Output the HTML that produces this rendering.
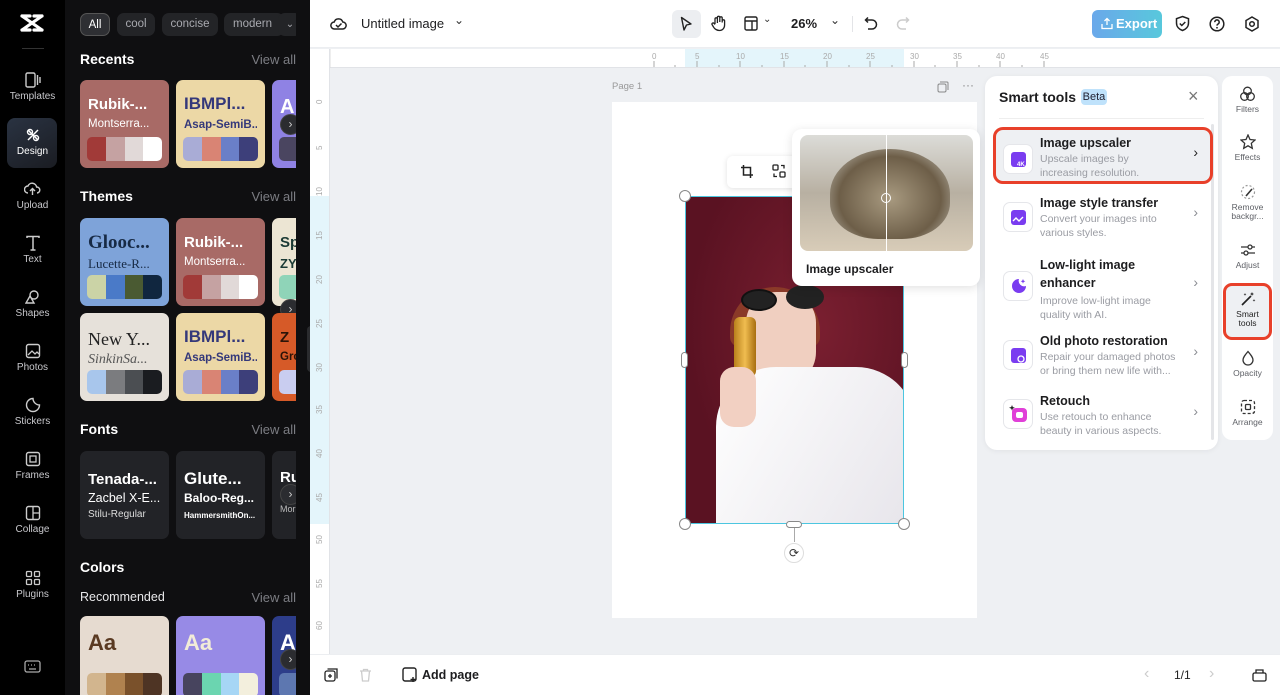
<!DOCTYPE html>
<html><head><meta charset="utf-8"><style>
*{box-sizing:border-box;margin:0;padding:0}
body{width:1280px;height:695px;overflow:hidden;font-family:"Liberation Sans",sans-serif;background:#eef0f3;position:relative}
.abs{position:absolute}
#rail{left:0;top:0;width:65px;height:695px;background:#000}
#panelbg{left:65px;top:0;width:245px;height:695px;background:#0f0f11}
#panel{left:65px;top:0;width:231px;height:695px;overflow:hidden}
.ri{position:absolute;left:0;width:65px;text-align:center;color:#c8c8cc;font-size:10px}
.ri svg{display:block;margin:0 auto 3px}
.chip{position:absolute;top:13px;height:23px;border-radius:7px;background:#232427;color:#a9aab0;font-size:11.5px;line-height:23px;text-align:center}
.h{position:absolute;left:15px;color:#fff;font-weight:bold;font-size:14px}
.va{position:absolute;right:0;color:#7c7d83;font-size:13px}
.card{position:absolute;width:89px;height:88px;border-radius:7px;overflow:hidden;padding:16px 8px 0}
.card .t1{font-weight:bold;font-size:15px;white-space:nowrap;overflow:hidden}
.card .t2{font-size:11.5px;margin-top:5px;white-space:nowrap;overflow:hidden}
.pal{position:absolute;left:7px;right:7px;bottom:7px;height:24px;border-radius:5px;overflow:hidden;display:flex}
.pal i{flex:1}
.arr{position:absolute;width:21px;height:21px;border-radius:50%;background:#2b2c30;border:1px solid #444;color:#ccc;font-size:12px;line-height:19px;text-align:center}
#top{left:310px;top:0;width:970px;height:48px;background:#fff;border-bottom:1px solid #eceef1}
.st{position:absolute;left:0;width:233px;padding-left:55px}
.st b{display:block;font-size:12.5px;color:#1d1d1f}
.st span{display:block;font-size:10.5px;color:#9a9ca3;line-height:14px;margin-top:2px}
.ico{position:absolute;left:18px;width:30px;height:30px;border:1px solid #e5e6ea;border-radius:7px;background:#fff}
.chev{position:absolute;right:20px;color:#8a8c92;font-size:14px}
.rr{position:absolute;left:0;width:51px;text-align:center;font-size:8.5px;color:#5e6066;line-height:9px}
.rr svg{display:block;margin:0 auto 3px}
</style></head><body>

<div id="rail" class="abs">
  <svg class="abs" style="left:20px;top:14px" width="24" height="18" viewBox="0 0 24 18"><path d="M2 2 L22 16 M22 2 L2 16 M2 2 H10 M14 16 H22 M14 2H22 M2 16H10" stroke="#fff" stroke-width="3.2" fill="none" stroke-linecap="round"/></svg>
  <div class="abs" style="left:22px;top:48px;width:22px;height:1px;background:#333"></div>
  <div class="ri" style="top:72px"><svg width="16" height="16" viewBox="0 0 16 16"><rect x="1" y="1" width="9" height="14" rx="1.5" fill="none" stroke="#ccc" stroke-width="1.4"/><path d="M12.5 3v10M15 5v6" stroke="#ccc" stroke-width="1.4"/></svg>Templates</div>
  <div class="abs" style="left:7px;top:118px;width:50px;height:50px;border-radius:8px;background:linear-gradient(150deg,#2a3342,#1a1c22)"></div>
  <div class="ri" style="top:127px;color:#fff"><svg width="16" height="16" viewBox="0 0 16 16"><path d="M3 3l10 10M13 3L3 13" stroke="#fff" stroke-width="1.5" fill="none"/><circle cx="5" cy="5" r="2.5" fill="none" stroke="#fff" stroke-width="1.4"/><circle cx="11" cy="11" r="2.5" fill="none" stroke="#fff" stroke-width="1.4"/></svg>Design</div>
  <div class="ri" style="top:181px"><svg width="17" height="16" viewBox="0 0 17 16"><path d="M4 12a3.5 3.5 0 010-7 4.5 4.5 0 018.6 1A3 3 0 0113 12M8.5 14V8M6 10l2.5-2.5L11 10" fill="none" stroke="#ccc" stroke-width="1.4"/></svg>Upload</div>
  <div class="ri" style="top:235px"><svg width="16" height="16" viewBox="0 0 16 16"><path d="M2 3V1.5h12V3M8 1.5V15M5.5 15h5" fill="none" stroke="#ccc" stroke-width="1.5"/></svg>Text</div>
  <div class="ri" style="top:289px"><svg width="16" height="16" viewBox="0 0 16 16"><circle cx="9" cy="6" r="4" fill="none" stroke="#ccc" stroke-width="1.4"/><path d="M5 7L1 14h8z" fill="#000" stroke="#ccc" stroke-width="1.4"/></svg>Shapes</div>
  <div class="ri" style="top:343px"><svg width="16" height="16" viewBox="0 0 16 16"><rect x="1.5" y="1.5" width="13" height="13" rx="2" fill="none" stroke="#ccc" stroke-width="1.4"/><path d="M3 12l4-4 3 3 2-2 2 2" fill="none" stroke="#ccc" stroke-width="1.3"/></svg>Photos</div>
  <div class="ri" style="top:397px"><svg width="16" height="16" viewBox="0 0 16 16"><path d="M14.5 8A6.5 6.5 0 118 1.5c0 3.5 3 6.5 6.5 6.5z" fill="none" stroke="#ccc" stroke-width="1.4"/></svg>Stickers</div>
  <div class="ri" style="top:451px"><svg width="16" height="16" viewBox="0 0 16 16"><rect x="1.5" y="1.5" width="13" height="13" rx="2" fill="none" stroke="#ccc" stroke-width="1.4"/><rect x="5" y="5" width="6" height="6" fill="none" stroke="#ccc" stroke-width="1.3"/></svg>Frames</div>
  <div class="ri" style="top:505px"><svg width="16" height="16" viewBox="0 0 16 16"><rect x="1.5" y="1.5" width="13" height="13" rx="2" fill="none" stroke="#ccc" stroke-width="1.4"/><path d="M8 1.5v13M8 8h6.5" stroke="#ccc" stroke-width="1.3"/></svg>Collage</div>
  <div class="ri" style="top:570px"><svg width="16" height="16" viewBox="0 0 16 16"><rect x="1.5" y="1.5" width="5" height="5" rx="1" fill="none" stroke="#ccc" stroke-width="1.3"/><rect x="9.5" y="1.5" width="5" height="5" rx="1" fill="none" stroke="#ccc" stroke-width="1.3"/><rect x="1.5" y="9.5" width="5" height="5" rx="1" fill="none" stroke="#ccc" stroke-width="1.3"/><rect x="9.5" y="9.5" width="5" height="5" rx="1" fill="none" stroke="#ccc" stroke-width="1.3"/></svg>Plugins</div>
  <svg class="abs" style="left:24px;top:660px" width="17" height="13" viewBox="0 0 17 13"><rect x="1" y="1" width="15" height="11" rx="2" fill="none" stroke="#aaa" stroke-width="1.3"/><path d="M4 5h1M7 5h1M10 5h1M13 5h0M5 9h7" stroke="#aaa" stroke-width="1.3"/></svg>
</div>

<div id="panelbg" class="abs"></div>
<div id="panel" class="abs">
  <div class="chip" style="left:15px;width:30px;background:#2e2f33;color:#fff;border:1px solid #555">All</div>
  <div class="chip" style="left:52px;width:38px">cool</div>
  <div class="chip" style="left:97px;width:56px">concise</div>
  <div class="chip" style="left:159px;width:60px;text-align:left;padding-left:9px;overflow:hidden">modern</div>
  <div class="chip" style="left:213px;width:24px;font-size:10px">⌄</div>

  <div class="h" style="top:51px">Recents</div><div class="va" style="top:52px">View all</div>
  <div class="card" style="left:15px;top:80px;background:#a86a66;color:#fff"><div class="t1">Rubik-...</div><div class="t2">Montserra...</div><div class="pal"><i style="background:#a13a38"></i><i style="background:#c5a2a2"></i><i style="background:#e1d9d8"></i><i style="background:#fff"></i></div></div>
  <div class="card" style="left:111px;top:80px;background:#ecd8a6;color:#34387a"><div class="t1" style="font-size:17px;margin-top:-2px">IBMPl...</div><div class="t2" style="font-weight:bold">Asap-SemiB...</div><div class="pal"><i style="background:#a9acd6"></i><i style="background:#d98474"></i><i style="background:#6a7fc8"></i><i style="background:#3d3f7a"></i></div></div>
  <div class="card" style="left:207px;top:80px;background:#8f82e4;color:#fff"><div class="t1" style="font-size:20px">A</div><div class="pal"><i style="background:#4a4560"></i></div></div>
  <div class="arr" style="left:215px;top:114px">›</div>

  <div class="h" style="top:188px">Themes</div><div class="va" style="top:189px">View all</div>
  <div class="card" style="left:15px;top:218px;background:#7ea3d9;color:#172a45;font-family:'Liberation Serif',serif"><div class="t1" style="font-size:19px;margin-top:-2px">Glooc...</div><div class="t2" style="font-size:13px;margin-top:2px">Lucette-R...</div><div class="pal"><i style="background:#cbd3a6"></i><i style="background:#4a7ac8"></i><i style="background:#4a5a32"></i><i style="background:#10263f"></i></div></div>
  <div class="card" style="left:111px;top:218px;background:#a86a66;color:#fff"><div class="t1">Rubik-...</div><div class="t2">Montserra...</div><div class="pal"><i style="background:#a13a38"></i><i style="background:#c5a2a2"></i><i style="background:#e1d9d8"></i><i style="background:#fff"></i></div></div>
  <div class="card" style="left:207px;top:218px;background:#ece5d3;color:#1b3a34"><div class="t1">Sp</div><div class="t2" style="font-weight:bold;font-size:13px">ZY</div><div class="pal"><i style="background:#8fd4b8"></i></div></div>
  <div class="arr" style="left:215px;top:299px">›</div>

  <div class="card" style="left:15px;top:313px;background:#e6e1da;color:#222;font-family:'Liberation Serif',serif"><div class="t1" style="font-weight:normal;font-size:18px">New Y...</div><div class="t2" style="font-style:italic;font-size:14px;color:#555;margin-top:2px">SinkinSa...</div><div class="pal"><i style="background:#a8c6ec"></i><i style="background:#7b7c7f"></i><i style="background:#4b4e52"></i><i style="background:#1a1c20"></i></div></div>
  <div class="card" style="left:111px;top:313px;background:#ecd8a6;color:#34387a"><div class="t1" style="font-size:17px;margin-top:-2px">IBMPl...</div><div class="t2" style="font-weight:bold">Asap-SemiB...</div><div class="pal"><i style="background:#a9acd6"></i><i style="background:#d98474"></i><i style="background:#6a7fc8"></i><i style="background:#3d3f7a"></i></div></div>
  <div class="card" style="left:207px;top:313px;background:#d65a28;color:#2a1408"><div class="t1">Z</div><div class="t2" style="font-weight:bold">Gro</div><div class="pal"><i style="background:#c9cdf0"></i></div></div>

  <div class="h" style="top:421px">Fonts</div><div class="va" style="top:422px">View all</div>
  <div class="card" style="left:15px;top:451px;background:#222327;color:#fff;padding-top:20px"><div class="t1" style="font-size:15px">Tenada-...</div><div class="t2" style="font-size:12.5px;margin-top:3px">Zacbel X-E...</div><div class="t2" style="font-size:10px;margin-top:4px;color:#ddd">Stilu-Regular</div></div>
  <div class="card" style="left:111px;top:451px;background:#222327;color:#fff;padding-top:18px"><div class="t1" style="font-size:17px">Glute...</div><div class="t2" style="font-weight:bold;font-size:12px;margin-top:2px">Baloo-Reg...</div><div class="t2" style="font-size:8px;font-weight:bold;margin-top:6px">HammersmithOn...</div></div>
  <div class="card" style="left:207px;top:451px;background:#222327;color:#fff;padding-top:18px"><div class="t1">Ru</div><div class="t2" style="font-size:9px;margin-top:18px;color:#bbb">Mor</div></div>
  <div class="arr" style="left:215px;top:484px">›</div>

  <div class="h" style="top:559px">Colors</div>
  <div class="abs" style="left:15px;top:590px;color:#e8e8ea;font-size:12.5px">Recommended</div><div class="va" style="top:590px">View all</div>
  <div class="card" style="left:15px;top:616px;height:100px;background:#e6dbd0;color:#5a3a22;padding-top:14px"><div class="t1" style="font-size:22px">Aa</div><div class="pal" style="bottom:auto;top:57px"><i style="background:#d2b58e"></i><i style="background:#b0824f"></i><i style="background:#7a512b"></i><i style="background:#4e3424"></i></div></div>
  <div class="card" style="left:111px;top:616px;height:100px;background:#978ae6;color:#f2ecd8;padding-top:14px"><div class="t1" style="font-size:22px">Aa</div><div class="pal" style="bottom:auto;top:57px"><i style="background:#47445e"></i><i style="background:#6bd5b0"></i><i style="background:#a6d6f5"></i><i style="background:#f3efdd"></i></div></div>
  <div class="card" style="left:207px;top:616px;height:100px;background:#2d3d8a;color:#fff;padding-top:14px"><div class="t1" style="font-size:22px">A</div><div class="pal" style="bottom:auto;top:57px"><i style="background:#5d77b0"></i></div></div>
  <div class="arr" style="left:215px;top:649px">›</div>
</div>
<div class="abs" style="left:307px;top:326px;width:8px;height:46px;border-radius:4px;background:#2a2b2e"></div>

<div id="top" class="abs">
  <svg class="abs" style="left:20px;top:16px" width="17" height="15" viewBox="0 0 17 15"><path d="M4.5 13a3.5 3.5 0 01-.3-7A4.5 4.5 0 0112.8 6 3.5 3.5 0 0112.5 13z M6 9l2 2 3.5-3.5" fill="none" stroke="#222" stroke-width="1.5"/></svg>
  <div class="abs" style="left:51px;top:16px;font-size:13px;color:#1d1d1f">Untitled image</div>
  <div class="abs" style="left:144px;top:13px;font-size:12px;color:#333">⌄</div>
  <div class="abs" style="left:362px;top:10px;width:29px;height:28px;border-radius:6px;background:#eceef1"></div>
  <svg class="abs" style="left:370px;top:16px" width="13" height="16" viewBox="0 0 13 16"><path d="M1.5 1.5L11 8l-4.5 1L4 14z" fill="none" stroke="#222" stroke-width="1.4" stroke-linejoin="round"/></svg>
  <svg class="abs" style="left:401px;top:15px" width="16" height="17" viewBox="0 0 16 17"><path d="M4 9V4a1.2 1.2 0 012.4 0v4M6.4 7V2.5a1.2 1.2 0 012.4 0V7M8.8 7V3a1.2 1.2 0 012.4 0v4.5M11.2 6a1.2 1.2 0 012.4 0v4c0 3.5-2.5 5.5-5 5.5S3.5 14 2.5 12L1 9.5a1.2 1.2 0 012-1.2L4 9.5" fill="none" stroke="#222" stroke-width="1.3"/></svg>
  <svg class="abs" style="left:434px;top:16px" width="14" height="15" viewBox="0 0 14 15"><rect x="1" y="1" width="12" height="13" rx="1.5" fill="none" stroke="#222" stroke-width="1.4"/><path d="M1 5h12M8 5v9" stroke="#222" stroke-width="1.4"/></svg>
  <div class="abs" style="left:453px;top:14px;font-size:10px;color:#333">⌄</div>
  <div class="abs" style="left:481px;top:16px;font-size:13px;color:#1d1d1f;font-weight:bold">26%</div>
  <div class="abs" style="left:520px;top:13px;font-size:12px;color:#333">⌄</div>
  <div class="abs" style="left:542px;top:16px;width:1px;height:16px;background:#e3e4e7"></div>
  <svg class="abs" style="left:554px;top:16px" width="14" height="15" viewBox="0 0 14 15"><path d="M4 1.5L1.5 4 4 6.5M1.5 4H8a4.5 4.5 0 010 9H4" fill="none" stroke="#222" stroke-width="1.5"/></svg>
  <svg class="abs" style="left:586px;top:16px" width="14" height="15" viewBox="0 0 14 15"><path d="M10 1.5L12.5 4 10 6.5M12.5 4H6a4.5 4.5 0 000 9H10" fill="none" stroke="#ccc" stroke-width="1.5"/></svg>
  <div class="abs" style="left:782px;top:10px;width:70px;height:28px;border-radius:6px;background:linear-gradient(90deg,#6aa8ea,#58c8dc);color:#fff;font-size:13px;font-weight:bold;line-height:28px;padding-left:24px">Export</div>
  <svg class="abs" style="left:791px;top:17px" width="12" height="13" viewBox="0 0 12 13"><path d="M6 8V1.5M3.5 4L6 1.5 8.5 4M1 7v4.5h10V7" fill="none" stroke="#fff" stroke-width="1.3"/></svg>
  <svg class="abs" style="left:865px;top:15px" width="15" height="17" viewBox="0 0 15 17"><path d="M7.5 1.5l6 2.2V8c0 4-3 6.5-6 7.5C4.5 14.5 1.5 12 1.5 8V3.7z M4.8 8.5l2 2 3.5-3.5" fill="none" stroke="#222" stroke-width="1.5"/></svg>
  <svg class="abs" style="left:899px;top:16px" width="16" height="16" viewBox="0 0 16 16"><circle cx="8" cy="8" r="6.8" fill="none" stroke="#222" stroke-width="1.5"/><path d="M5.8 6.2a2.2 2.2 0 114 1.2c-.8.6-1.8 1-1.8 2.2" fill="none" stroke="#222" stroke-width="1.5"/><circle cx="8" cy="11.8" r=".9" fill="#222"/></svg>
  <svg class="abs" style="left:934px;top:16px" width="16" height="16" viewBox="0 0 16 16"><path d="M8 1l6 3.5v7L8 15l-6-3.5v-7z" fill="none" stroke="#222" stroke-width="1.5"/><circle cx="8" cy="8" r="2.3" fill="none" stroke="#222" stroke-width="1.5"/></svg>
</div>

<!-- rulers -->
<div class="abs" style="left:310px;top:49px;width:970px;height:19px;background:#fff;border-bottom:1px solid #e1e3e7"></div>
<div class="abs" style="left:685px;top:49px;width:219px;height:18px;background:#e4f5fb"></div>
<div class="abs" style="left:310px;top:49px;width:20px;height:606px;background:#fff;border-right:1px solid #e1e3e7"></div>
<div class="abs" style="left:310px;top:196px;width:19px;height:328px;background:#e4f5fb"></div>
<svg class="abs" style="left:330px;top:49px" width="950" height="19">
<g fill="#aaa" font-size="8" font-family="Liberation Sans">
<text x="322" y="10">0</text><text x="365" y="10">5</text><text x="406" y="10">10</text><text x="450" y="10">15</text><text x="493" y="10">20</text><text x="536" y="10">25</text><text x="580" y="10">30</text><text x="623" y="10">35</text><text x="666" y="10">40</text><text x="710" y="10">45</text></g>
<g stroke="#aaa"><path d="M324 12v6M367 12v6M410 12v6M454 12v6M497 12v6M540 12v6M584 12v6M627 12v6M670 12v6M714 12v6M345 16v2M389 16v2M432 16v2M475 16v2M519 16v2M562 16v2M605 16v2M649 16v2M692 16v2"/></g>
<path d="M0 0v19" stroke="#ddd"/></svg>
<svg class="abs" style="left:310px;top:68px" width="20" height="590">
<g fill="#aaa" font-size="8" font-family="Liberation Sans">
<text transform="translate(12,36) rotate(-90)">0</text><text transform="translate(12,82) rotate(-90)">5</text><text transform="translate(12,128) rotate(-90)">10</text><text transform="translate(12,172) rotate(-90)">15</text><text transform="translate(12,216) rotate(-90)">20</text><text transform="translate(12,260) rotate(-90)">25</text><text transform="translate(12,304) rotate(-90)">30</text><text transform="translate(12,346) rotate(-90)">35</text><text transform="translate(12,390) rotate(-90)">40</text><text transform="translate(12,434) rotate(-90)">45</text><text transform="translate(12,476) rotate(-90)">50</text><text transform="translate(12,520) rotate(-90)">55</text><text transform="translate(12,562) rotate(-90)">60</text></g></svg>

<!-- page -->
<div class="abs" style="left:612px;top:81px;font-size:9.5px;color:#999">Page 1</div>
<svg class="abs" style="left:937px;top:81px" width="12" height="12" viewBox="0 0 12 12"><rect x="1" y="3" width="8" height="8" rx="1.5" fill="none" stroke="#888"/><path d="M3 1h7a1 1 0 011 1v7" fill="none" stroke="#888"/></svg>
<div class="abs" style="left:962px;top:78px;font-size:12px;color:#888">···</div>
<div class="abs" style="left:612px;top:102px;width:365px;height:516px;background:#fff"></div>

<!-- image -->
<div class="abs" style="left:685px;top:196px;width:219px;height:328px;background:radial-gradient(ellipse at 60% 40%,#7a1f30,#5a1222 70%);overflow:hidden;border:1.5px solid #4cc6e0">
  <div class="abs" style="left:44px;top:90px;width:90px;height:60px;border-radius:45px 45px 10px 10px;background:#8a3a28"></div>
  <div class="abs" style="left:60px;top:95px;width:70px;height:95px;border-radius:35px 35px 40px 40px;background:#f0cfc0"></div>
  <div class="abs" style="left:55px;top:92px;width:36px;height:22px;border-radius:50%;background:#222;border:2px solid #111"></div>
  <div class="abs" style="left:100px;top:88px;width:38px;height:24px;border-radius:50%;background:#222"></div>
  <div class="abs" style="left:30px;top:170px;width:200px;height:170px;border-radius:60px 60px 0 0;background:linear-gradient(120deg,#fff,#e6e4ea)"></div>
  <div class="abs" style="left:48px;top:120px;width:22px;height:60px;border-radius:6px;background:linear-gradient(90deg,#b8801c,#f0bd50,#a86e10)"></div>
  <div class="abs" style="left:34px;top:170px;width:36px;height:60px;border-radius:14px;background:#f2d0c2"></div>
</div>
<div class="abs" style="left:679px;top:190px;width:12px;height:12px;border-radius:50%;background:#fff;border:1px solid #888"></div>
<div class="abs" style="left:898px;top:518px;width:12px;height:12px;border-radius:50%;background:#fff;border:1px solid #888"></div>
<div class="abs" style="left:679px;top:518px;width:12px;height:12px;border-radius:50%;background:#fff;border:1px solid #888"></div>
<div class="abs" style="left:681px;top:352px;width:7px;height:16px;border-radius:4px;background:#fff;border:1px solid #888"></div>
<div class="abs" style="left:901px;top:352px;width:7px;height:16px;border-radius:4px;background:#fff;border:1px solid #888"></div>
<div class="abs" style="left:786px;top:521px;width:16px;height:7px;border-radius:4px;background:#fff;border:1px solid #888"></div>
<div class="abs" style="left:794px;top:528px;width:1px;height:14px;background:#aaa"></div>
<div class="abs" style="left:784px;top:543px;width:20px;height:20px;border-radius:50%;background:#fff;border:1px solid #ddd;font-size:12px;text-align:center;line-height:18px;color:#333">⟳</div>

<div class="abs" style="left:727px;top:156px;width:80px;height:32px;border-radius:6px;background:#fff;box-shadow:0 1px 6px rgba(0,0,0,.12)"></div>
<svg class="abs" style="left:740px;top:164px" width="14" height="15" viewBox="0 0 14 15"><path d="M3.5 1v10H13M1 3.5h9.5V14" fill="none" stroke="#222" stroke-width="1.5"/></svg>
<svg class="abs" style="left:772px;top:164px" width="14" height="14" viewBox="0 0 14 14"><rect x="1" y="1" width="5" height="5" rx="1" fill="none" stroke="#222" stroke-width="1.3"/><rect x="8" y="8" width="5" height="5" rx="1" fill="none" stroke="#222" stroke-width="1.3"/><path d="M9 1.5h3v3M5 12.5H2v-3" fill="none" stroke="#222" stroke-width="1.3"/></svg>

<!-- popup -->
<div class="abs" style="left:792px;top:129px;width:188px;height:157px;border-radius:10px;background:#fff;box-shadow:0 2px 10px rgba(0,0,0,.12)">
  <div class="abs" style="left:8px;top:6px;width:173px;height:116px;border-radius:8px;overflow:hidden;background:linear-gradient(180deg,#dcdcd8,#b8b0a2 50%,#d8ccb8)">
    <div class="abs" style="left:30px;top:14px;width:120px;height:90px;border-radius:50% 50% 40% 40%;background:radial-gradient(ellipse at 50% 55%,#a89a80,#6d5e48 60%,#b9b4a8 90%)"></div>
    <div class="abs" style="left:86px;top:0;width:1px;height:116px;background:#fff"></div>
    <div class="abs" style="left:81px;top:58px;width:10px;height:10px;border-radius:50%;border:1.5px solid #fff"></div>
  </div>
  <div class="abs" style="left:14px;top:133px;font-size:12px;color:#1d1d1f;font-weight:bold">Image upscaler</div>
</div>

<!-- smart tools -->
<div class="abs" style="left:985px;top:76px;width:233px;height:374px;border-radius:12px;background:#fff;box-shadow:0 1px 6px rgba(0,0,0,.06)">
  <div class="abs" style="left:14px;top:13px;font-size:14px;font-weight:bold;color:#1d1d1f">Smart tools</div>
  <div class="abs" style="left:96px;top:13px;width:26px;height:16px;border-radius:4px;background:#bfe2fb;font-size:11px;text-align:center;line-height:16px;color:#223">Beta</div>
  <div class="abs" style="left:203px;top:10px;font-size:18px;color:#777">×</div>
  <div class="abs" style="left:14px;top:42px;width:205px;height:1px;background:#eee"></div>
  <div class="abs" style="left:226px;top:48px;width:3px;height:316px;border-radius:2px;background:#e4e5e8"></div>
  <div class="abs" style="left:8px;top:51px;width:220px;height:57px;border-radius:10px;background:#eef0f3;border:3.5px solid #e8402a"></div>
  <div class="st" style="top:60px"><b>Image upscaler</b><span>Upscale images by<br>increasing resolution.</span></div><div class="ico" style="top:68px"></div><div class="chev" style="top:68px;color:#222">›</div>
  <div class="st" style="top:120px"><b>Image style transfer</b><span>Convert your images into<br>various styles.</span></div><div class="ico" style="top:126px"></div><div class="chev" style="top:128px">›</div>
  <div class="st" style="top:180px"><b style="line-height:18px">Low-light image<br>enhancer</b><span>Improve low-light image<br>quality with AI.</span></div><div class="ico" style="top:195px"></div><div class="chev" style="top:198px">›</div>
  <div class="st" style="top:258px"><b>Old photo restoration</b><span>Repair your damaged photos<br>or bring them new life with...</span></div><div class="ico" style="top:264px"></div><div class="chev" style="top:267px">›</div>
  <div class="st" style="top:318px"><b>Retouch</b><span>Use retouch to enhance<br>beauty in various aspects.</span></div><div class="ico" style="top:323px"></div><div class="chev" style="top:327px">›</div>
  <svg class="abs" style="left:25px;top:75px" width="17" height="17" viewBox="0 0 17 17"><rect x="1" y="1" width="15" height="15" rx="3" fill="#7a3cf0"/><text x="7" y="15" fill="#fff" font-size="6" font-weight="bold" font-family="Liberation Sans">4K</text></svg>
  <svg class="abs" style="left:25px;top:133px" width="17" height="17" viewBox="0 0 17 17"><rect x="1" y="1" width="15" height="15" rx="3" fill="#7a3cf0"/><path d="M3 12l3-3 3 3 4-4" stroke="#fff" stroke-width="1.4" fill="none"/></svg>
  <svg class="abs" style="left:25px;top:201px" width="18" height="18" viewBox="0 0 18 18"><path d="M9 2a7 7 0 107 7A5.5 5.5 0 019 2z" fill="#7a3cf0"/><path d="M13 2l.7 1.6 1.6.7-1.6.7L13 6.6l-.7-1.6-1.6-.7 1.6-.7z" fill="#7a3cf0"/></svg>
  <svg class="abs" style="left:25px;top:271px" width="17" height="17" viewBox="0 0 17 17"><rect x="1" y="1" width="15" height="15" rx="3" fill="#7a3cf0"/><circle cx="11" cy="12" r="3" fill="none" stroke="#fff" stroke-width="1.3"/></svg>
  <svg class="abs" style="left:24px;top:329px" width="19" height="18" viewBox="0 0 19 18"><rect x="3" y="3" width="15" height="14" rx="4" fill="#e040d8"/><rect x="7" y="7" width="7" height="6" rx="2" fill="#fff"/><path d="M3 0l.8 2 2 .8-2 .8L3 5.6 2.2 3.6 0 2.8l2.2-.8z" fill="#222"/></svg>
</div>

<!-- right rail -->
<div class="abs" style="left:1222px;top:76px;width:51px;height:364px;border-radius:10px;background:#fff">
  <div class="rr" style="top:10px"><svg width="17" height="16" viewBox="0 0 17 16"><circle cx="8.5" cy="5" r="3.8" fill="none" stroke="#333" stroke-width="1.3"/><circle cx="5.5" cy="10.5" r="3.8" fill="none" stroke="#333" stroke-width="1.3"/><circle cx="11.5" cy="10.5" r="3.8" fill="none" stroke="#333" stroke-width="1.3"/></svg>Filters</div>
  <div class="rr" style="top:58px"><svg width="16" height="16" viewBox="0 0 16 16"><path d="M8 1l2 4.5 5 .5-3.7 3.3 1 5L8 11.8 3.7 14.3l1-5L1 6l5-.5z" fill="none" stroke="#333" stroke-width="1.3"/></svg>Effects</div>
  <div class="rr" style="top:108px"><svg width="16" height="16" viewBox="0 0 16 16"><circle cx="8" cy="8" r="6.5" fill="none" stroke="#999" stroke-width="1.2" stroke-dasharray="2 2"/><path d="M6 12l6-7" stroke="#333" stroke-width="1.6"/></svg>Remove<br>backgr...</div>
  <div class="rr" style="top:166px"><svg width="16" height="16" viewBox="0 0 16 16"><path d="M1 5h14M1 11h14" stroke="#333" stroke-width="1.3"/><circle cx="10" cy="5" r="2" fill="#fff" stroke="#333" stroke-width="1.3"/><circle cx="6" cy="11" r="2" fill="#fff" stroke="#333" stroke-width="1.3"/></svg>Adjust</div>
  <div class="abs" style="left:1px;top:207px;width:49px;height:57px;border-radius:9px;background:#eef0f3;border:3.5px solid #e8402a"></div>
  <div class="rr" style="top:215px;color:#222"><svg width="16" height="16" viewBox="0 0 16 16"><path d="M2 14L11 5" stroke="#222" stroke-width="1.7"/><path d="M12 1l.6 1.4L14 3l-1.4.6L12 5l-.6-1.4L10 3l1.4-.6zM5 2l.4 1 1 .4-1 .4L5 5l-.4-1.2-1-.4 1-.4zM14 8l.4 1 1 .4-1 .4-.4 1-.4-1-1-.4 1-.4z" fill="#222"/></svg>Smart<br>tools</div>
  <div class="rr" style="top:274px"><svg width="14" height="16" viewBox="0 0 14 16"><path d="M7 1.5C4 5 2 7.5 2 10a5 5 0 0010 0c0-2.5-2-5-5-8.5z" fill="none" stroke="#333" stroke-width="1.3"/></svg>Opacity</div>
  <div class="rr" style="top:323px"><svg width="16" height="16" viewBox="0 0 16 16"><rect x="1.5" y="1.5" width="13" height="13" rx="2.5" fill="none" stroke="#333" stroke-width="1.3" stroke-dasharray="3 2"/><rect x="5.5" y="5.5" width="5" height="5" rx="1" fill="none" stroke="#333" stroke-width="1.3"/></svg>Arrange</div>
</div>

<!-- bottom bar -->
<div class="abs" style="left:310px;top:654px;width:970px;height:41px;background:#fff;border-top:1px solid #eceef1">
  <svg class="abs" style="left:14px;top:13px" width="14" height="14" viewBox="0 0 14 14"><rect x="1" y="3" width="10" height="10" rx="2" fill="none" stroke="#222" stroke-width="1.3"/><path d="M3.5 1H13v9.5M6 6v4M4 8h4" fill="none" stroke="#222" stroke-width="1.3"/></svg>
  <svg class="abs" style="left:49px;top:13px" width="13" height="14" viewBox="0 0 13 14"><path d="M1 3h11M4.5 3V1.5h4V3M2.5 3l1 10h6l1-10" fill="none" stroke="#ccc" stroke-width="1.3"/></svg>
  <svg class="abs" style="left:92px;top:12px" width="16" height="16" viewBox="0 0 16 16"><rect x="1" y="1" width="13" height="13" rx="2" fill="none" stroke="#222" stroke-width="1.4"/><path d="M11 10v5M8.5 12.5h5" stroke="#222" stroke-width="1.4"/></svg>
  <div class="abs" style="left:112px;top:13px;font-size:12.5px;color:#1d1d1f;font-weight:bold">Add page</div>
  <div class="abs" style="left:834px;top:10px;font-size:16px;color:#ccc">‹</div>
  <div class="abs" style="left:864px;top:13px;font-size:12px;color:#222">1/1</div>
  <div class="abs" style="left:899px;top:10px;font-size:16px;color:#ccc">›</div>
  <svg class="abs" style="left:942px;top:13px" width="15" height="14" viewBox="0 0 15 14"><rect x="1" y="5" width="13" height="8" rx="1.5" fill="none" stroke="#222" stroke-width="1.3"/><path d="M4 5V2h7v3" fill="none" stroke="#222" stroke-width="1.3"/></svg>
</div>
</body></html>
